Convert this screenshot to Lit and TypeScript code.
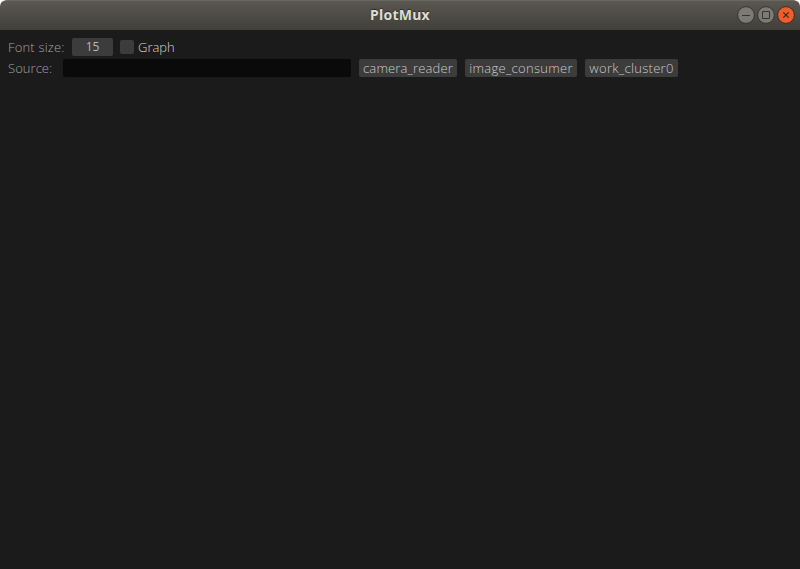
import { LitElement, html, css } from "lit";
import { customElement, property, state } from "lit/decorators.js";

@customElement("window-bar")
class WindowBar extends LitElement {
  @property() heading = "";
  static styles = css`
    :host {
      display: grid;
      grid-template-columns: 63px 1fr 63px;
      align-items: center;
      height: 30px;
      box-sizing: border-box;
      padding-bottom: 1px;
      border-top: 1px solid #6b6860;
      border-radius: 6px 6px 0 0;
      background: linear-gradient(#5a5850, #403f3a);
      font: 700 14px/20px "Noto Sans", sans-serif;
      color: #dfdbd2;
    }
    .title {
      grid-column: 2;
      text-align: center;
      text-shadow: 0 -1px 1px #2b2a26;
      letter-spacing: 0.25px;
    }
    .controls { display: flex; gap: 2px; height: 18px; }
    svg { width: 18px; height: 18px; display: block; }
    .ring { fill: #7b7a73; stroke: #34332e; }
    .close .ring { fill: #ee5d2c; stroke: #44291f; }
    .glyph { fill: none; stroke: #35342f; stroke-width: 1; }
    .close .glyph { stroke: #472318; stroke-width: 1.2; }
  `;
  render() {
    return html`
      <div class="title">${this.heading}</div>
      <div class="controls">
        <svg viewBox="0 0 18 18"><circle class="ring" cx="9" cy="9" r="8.4" /><path class="glyph" d="M5 9.5H13" /></svg>
        <svg viewBox="0 0 18 18"><circle class="ring" cx="9" cy="9" r="8.4" /><path class="glyph" d="M5.5 5.5H12.5V12.5H5.5Z" /></svg>
        <svg class="close" viewBox="0 0 18 18"><circle class="ring" cx="9" cy="9" r="8.4" /><path class="glyph" d="M6.3 6.3L11.7 11.7M11.7 6.3L6.3 11.7" /></svg>
      </div>
    `;
  }
}

@customElement("app-root")
class AppRoot extends LitElement {
  @state() fontSize = 15;
  static styles = css`
    :host {
      display: block;
      height: 569px;
      overflow: hidden;
      background: #fff;
    }
    .window {
      height: 100%;
      display: flex;
      flex-direction: column;
      border-radius: 6px 6px 0 0;
      overflow: hidden;
    }
    .body {
      flex: 1;
      background: #1b1b1b;
      padding: 8px;
      display: flex;
      flex-direction: column;
      gap: 3px;
      font: 300 13px/18px "Open Sans", "Noto Sans", sans-serif;
      color: #a0a0a0;
      white-space: nowrap;
    }
    .row { display: flex; height: 18px; align-items: center; }
    .label { width: 64px; letter-spacing: 0.18px; }
    .source { width: 55px; letter-spacing: 0.05px; }
    .number, .chip {
      height: 18px;
      background: #3c3c3c;
      border-radius: 2px;
      color: #cacaca;
      text-align: center;
    }
    .number { width: 41px; margin-right: 7px; font-weight: 500; font-size: 12px; color: #b8b8b8; }
    .box { width: 14px; height: 14px; background: #3c3c3c; border-radius: 2px; margin-right: 4px; }
    .check { color: #d6d6d6; }
    .field { width: 288px; height: 18px; background: #0a0a0a; border-radius: 2px; }
    .chip { margin-left: 8px; }
    .camera { width: 98px; letter-spacing: 0.15px; }
    .image { width: 112px; letter-spacing: 0.3px; }
    .work { width: 93px; letter-spacing: 0.3px; }
  `;
  render() {
    return html`
      <div class="window">
        <window-bar heading="PlotMux"></window-bar>
        <div class="body">
          <div class="row">
            <span class="label">Font size:</span>
            <span class="number">${this.fontSize}</span>
            <span class="box"></span>
            <span class="check">Graph</span>
          </div>
          <div class="row">
            <span class="label source">Source:</span>
            <span class="field"></span>
            <span class="chip camera">camera_reader</span>
            <span class="chip image">image_consumer</span>
            <span class="chip work">work_cluster0</span>
          </div>
        </div>
      </div>
    `;
  }
}
